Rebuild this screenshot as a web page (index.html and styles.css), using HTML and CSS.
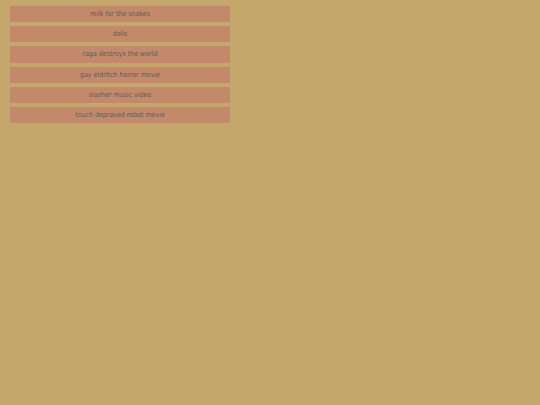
FILE: index.html
```html
<!DOCTYPE html>
<html>
<head>
<meta charset="utf-8">
<link rel="stylesheet" href="styles.css">
</head>
<body>
<div class="list">
  <div class="item">milk for the snakes</div>
  <div class="item">dolls</div>
  <div class="item">raga destroys the world</div>
  <div class="item">gay eldritch horror movie</div>
  <div class="item">slasher music video</div>
  <div class="item">touch depraved robot movie</div>
</div>
</body>
</html>
```
FILE: styles.css
```css
html, body {
  margin: 0;
  padding: 0;
  background: #c4a76a;
  height: 100%;
}
.list {
  display: flex;
  flex-direction: column;
  gap: 4px;
  padding: 6px 10px;
  width: 220px;
}
.item {
  background: #c4896a;
  height: 16.2px;
  line-height: 17.6px;
  text-align: center;
  font-family: "DejaVu Sans Condensed", "DejaVu Sans", sans-serif;
  font-stretch: condensed;
  font-size: 7px;
  color: #5a5e58;
}
```
